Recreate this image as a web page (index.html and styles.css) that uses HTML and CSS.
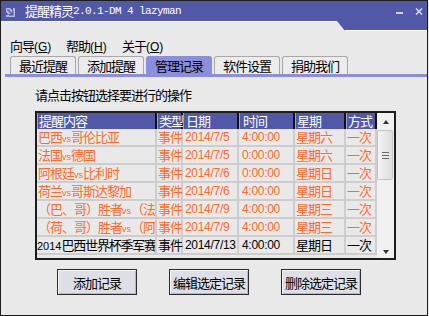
FILE: index.html
```html
<!DOCTYPE html>
<html lang="zh-CN">
<head>
  <meta charset="UTF-8">
  <meta name="viewport" content="width=device-width, initial-scale=1.0">
  <title>提醒精灵2.0.1-DM 4 lazyman</title>
  <link rel="stylesheet" href="styles.css">
</head>
<body>
  <div class="window">
    <div class="titlebar">
      <svg class="app-icon" width="9" height="9" viewBox="0 0 9 9">
        <path d="M0 0 H4 L7 3 V0 H9 V9 H0 V7 H3 L0 4 Z" fill="#b4b8dc"/>
        <path d="M1.5 1.5 L6.5 6.5 M3 6.8 H6.8 V3" stroke="#5158a8" stroke-width="1.4" fill="none"/>
      </svg>
      <span class="title-cn">提醒精灵</span><span class="title-en">2.0.1-DM 4 lazyman</span>
      <svg class="ctl ctl-min" width="7" height="2" viewBox="0 0 7 2">
        <rect width="7" height="2" fill="#cfd1ea"/>
      </svg>
      <svg class="ctl ctl-close" width="8" height="7" viewBox="0 0 8 7">
        <path d="M1 0.5 L7 6.5 M7 0.5 L1 6.5" stroke="#cfd1ea" stroke-width="1.7"/>
      </svg>
    </div>
    <div class="title-foot">
      <div class="foot-left"></div>
      <div class="foot-tab"></div>
    </div>

    <div class="menubar">
      <span class="menu-item">向导<span class="lat">(<u>G</u>)</span></span>
      <span class="menu-item">帮助<span class="lat">(<u>H</u>)</span></span>
      <span class="menu-item">关于<span class="lat">(<u>O</u>)</span></span>
    </div>

    <div class="tabs">
      <div class="tab">最近提醒</div>
      <div class="tab">添加提醒</div>
      <div class="tab active">管理记录</div>
      <div class="tab">软件设置</div>
      <div class="tab">捐助我们</div>
    </div>
    <div class="tab-line"></div>

    <div class="panel">
      <p class="prompt">请点击按钮选择要进行的操作</p>

      <div class="list">
        <div class="grid">
          <div class="row head">
            <div class="cell">提醒内容</div>
            <div class="cell">类型</div>
            <div class="cell">日期</div>
            <div class="cell">时间</div>
            <div class="cell">星期</div>
            <div class="cell">方式</div>
          </div>
          <div class="row hot">
            <div class="cell">巴西<span class="vs">vs</span>哥伦比亚</div>
            <div class="cell">事件</div>
            <div class="cell num">2014/7/5</div>
            <div class="cell num">4:00:00</div>
            <div class="cell">星期六</div>
            <div class="cell">一次</div>
          </div>
          <div class="row hot">
            <div class="cell">法国<span class="vs">vs</span>德国</div>
            <div class="cell">事件</div>
            <div class="cell num">2014/7/5</div>
            <div class="cell num">0:00:00</div>
            <div class="cell">星期六</div>
            <div class="cell">一次</div>
          </div>
          <div class="row hot">
            <div class="cell">阿根廷<span class="vs">vs</span>比利时</div>
            <div class="cell">事件</div>
            <div class="cell num">2014/7/6</div>
            <div class="cell num">0:00:00</div>
            <div class="cell">星期日</div>
            <div class="cell">一次</div>
          </div>
          <div class="row hot">
            <div class="cell">荷兰<span class="vs">vs</span>哥斯达黎加</div>
            <div class="cell">事件</div>
            <div class="cell num">2014/7/6</div>
            <div class="cell num">4:00:00</div>
            <div class="cell">星期日</div>
            <div class="cell">一次</div>
          </div>
          <div class="row hot">
            <div class="cell">（巴、哥）胜者<span class="vs">vs</span>（法、德）胜者</div>
            <div class="cell">事件</div>
            <div class="cell num">2014/7/9</div>
            <div class="cell num">4:00:00</div>
            <div class="cell">星期三</div>
            <div class="cell">一次</div>
          </div>
          <div class="row hot">
            <div class="cell">（荷、哥）胜者<span class="vs">vs</span>（阿、比）胜者</div>
            <div class="cell">事件</div>
            <div class="cell num">2014/7/9</div>
            <div class="cell num">4:00:00</div>
            <div class="cell">星期三</div>
            <div class="cell">一次</div>
          </div>
          <div class="row">
            <div class="cell tight"><span class="lat">2014</span>巴西世界杯季军赛</div>
            <div class="cell">事件</div>
            <div class="cell num">2014/7/13</div>
            <div class="cell num">4:00:00</div>
            <div class="cell">星期日</div>
            <div class="cell">一次</div>
          </div>
        </div>

        <div class="scrollbar">
          <div class="sb-btn"><span class="arrow-up"></span></div>
          <div class="sb-thumb">
            <span class="grip"></span><span class="grip"></span><span class="grip"></span>
          </div>
          <div class="sb-track"></div>
          <div class="sb-btn"><span class="arrow-down"></span></div>
        </div>
      </div>

      <div class="buttons">
        <button type="button">添加记录</button>
        <button type="button">编辑选定记录</button>
        <button type="button">删除选定记录</button>
      </div>
    </div>
  </div>
</body>
</html>
```

FILE: styles.css
```css
body {
  margin: 0;
  font-family: "Noto Sans CJK SC", "Liberation Sans", sans-serif;
  font-size: 13px;
  letter-spacing: -1px;
  color: #000;
  background: #e9e9e9;
}
.window {
  width: 428px;
  height: 316px;
  box-sizing: border-box;
  border: 1px solid #1c1c1c;
  background: #e9e9e9;
  overflow: hidden;
}
.lat {
  font-family: "Liberation Sans", sans-serif;
  font-size: 12px;
  letter-spacing: 0;
}

/* title bar */
.titlebar {
  height: 20px;
  background: #5158a8;
  display: flex;
  align-items: center;
  padding: 0 4px 0 5px;
  color: #fff;
}
.app-icon {
  margin-right: 10px;
  margin-top: 2px;
}
.title-cn {
  font-size: 13px;
  line-height: 16px;
}
.title-en {
  font-family: "Liberation Mono", monospace;
  font-size: 11px;
  letter-spacing: -0.6px;
  line-height: 16px;
}
.ctl-min {
  margin-left: auto;
  margin-top: 4px;
}
.ctl-close {
  margin-left: 12px;
  margin-top: 1px;
}
.title-foot {
  display: flex;
  height: 10px;
}
.foot-left {
  flex: 1;
  border-top: 1px solid #fff;
}
.foot-tab {
  width: 90px;
  background: #5158a8;
  border-bottom: 1px solid #fff;
  clip-path: polygon(0 0, 100% 0, 100% 100%, 8px 100%);
}

/* menu */
.menubar {
  height: 25px;
  box-sizing: border-box;
  padding: 7px 0 0 9px;
  display: flex;
  line-height: 16px;
}
.menu-item {
  width: 56px;
}
.menu-item u {
  text-decoration-thickness: 1px;
}

/* tabs */
.tabs {
  display: flex;
  gap: 2px;
  height: 18px;
  padding-left: 9px;
}
.tab {
  width: 66px;
  box-sizing: border-box;
  border: 1px solid #a8a8a8;
  border-bottom: none;
  border-radius: 3px 3px 0 0;
  background: #ececec;
  text-align: center;
  line-height: 17px;
}
.tab.active {
  background: #8a8edc;
  border-color: #8a8edc;
}
.tab-line {
  height: 3px;
  margin-left: 4px;
  background: #8a8edc;
}

/* content */
.panel {
  padding-left: 34px;
}
.prompt {
  margin: 10px 0 8px;
  line-height: 16px;
}
.list {
  width: 361px;
  height: 149px;
  box-sizing: border-box;
  border: 2px solid #1c1c1c;
  display: flex;
}
.grid {
  width: 340px;
}
.row {
  display: grid;
  grid-template-columns: 120px 26px 56px 56px 51px 31px;
  height: 18px;
}
.cell {
  box-sizing: border-box;
  border-right: 2px solid #cdcdcd;
  border-bottom: 2px solid #cdcdcd;
  padding-left: 1px;
  line-height: 16px;
  white-space: nowrap;
}
/* long names are cut at the column edge */
.row .cell:first-child {
  overflow: hidden;
}
.row .cell:nth-child(3) {
  padding-left: 2px;
}
.row .cell:nth-child(4) {
  padding-left: 3px;
}
.cell.tight {
  padding-left: 0;
  letter-spacing: -1.2px;
}
.cell.tight .lat {
  font-size: 11px;
}
.head {
  height: 16px;
  background: #5158a8;
  color: #fff;
}
.head .cell {
  border-bottom: none;
  border-right: 2px solid #111;
  border-left: 1px solid #9da1d6;
  line-height: 15px;
}
.hot {
  color: #ff6a2a;
}
.num {
  font-family: "Liberation Sans", sans-serif;
  font-size: 12px;
  letter-spacing: -0.3px;
}
.vs {
  font-family: "Liberation Sans", sans-serif;
  font-size: 9px;
  letter-spacing: 0;
}

/* scrollbar */
.scrollbar {
  width: 17px;
  background: #f1f1f1;
  display: flex;
  flex-direction: column;
}
.sb-btn {
  height: 17px;
  display: flex;
  align-items: center;
  justify-content: center;
}
.arrow-up,
.arrow-down {
  width: 0;
  height: 0;
  border-left: 3px solid transparent;
  border-right: 3px solid transparent;
}
.arrow-up {
  border-bottom: 4px solid #333;
}
.arrow-down {
  border-top: 4px solid #333;
  margin-top: 4px;
}
.sb-thumb {
  height: 50px;
  margin: 0 1px 0 0;
  box-sizing: border-box;
  border: 1px solid #c4c4c4;
  border-radius: 2px;
  background: linear-gradient(to right, #f4f4f4, #dedede);
  display: flex;
  flex-direction: column;
  align-items: center;
  justify-content: center;
  gap: 2px;
}
.grip {
  width: 7px;
  height: 1px;
  background: #6a6a6a;
}
.sb-track {
  flex: 1;
}

/* buttons */
.buttons {
  display: flex;
  gap: 32px;
  margin: 9px 0 0 22px;
}
button {
  width: 80px;
  height: 26px;
  padding: 0;
  font-family: "Noto Sans CJK SC", sans-serif;
  font-size: 13px;
  letter-spacing: -1px;
  color: #000;
  background: #dedfe6;
  border: 1px solid #2a2a2a;
  box-shadow: inset 1px 1px #f6f6f8, inset -1px -1px #b8b8c0;
}
```
